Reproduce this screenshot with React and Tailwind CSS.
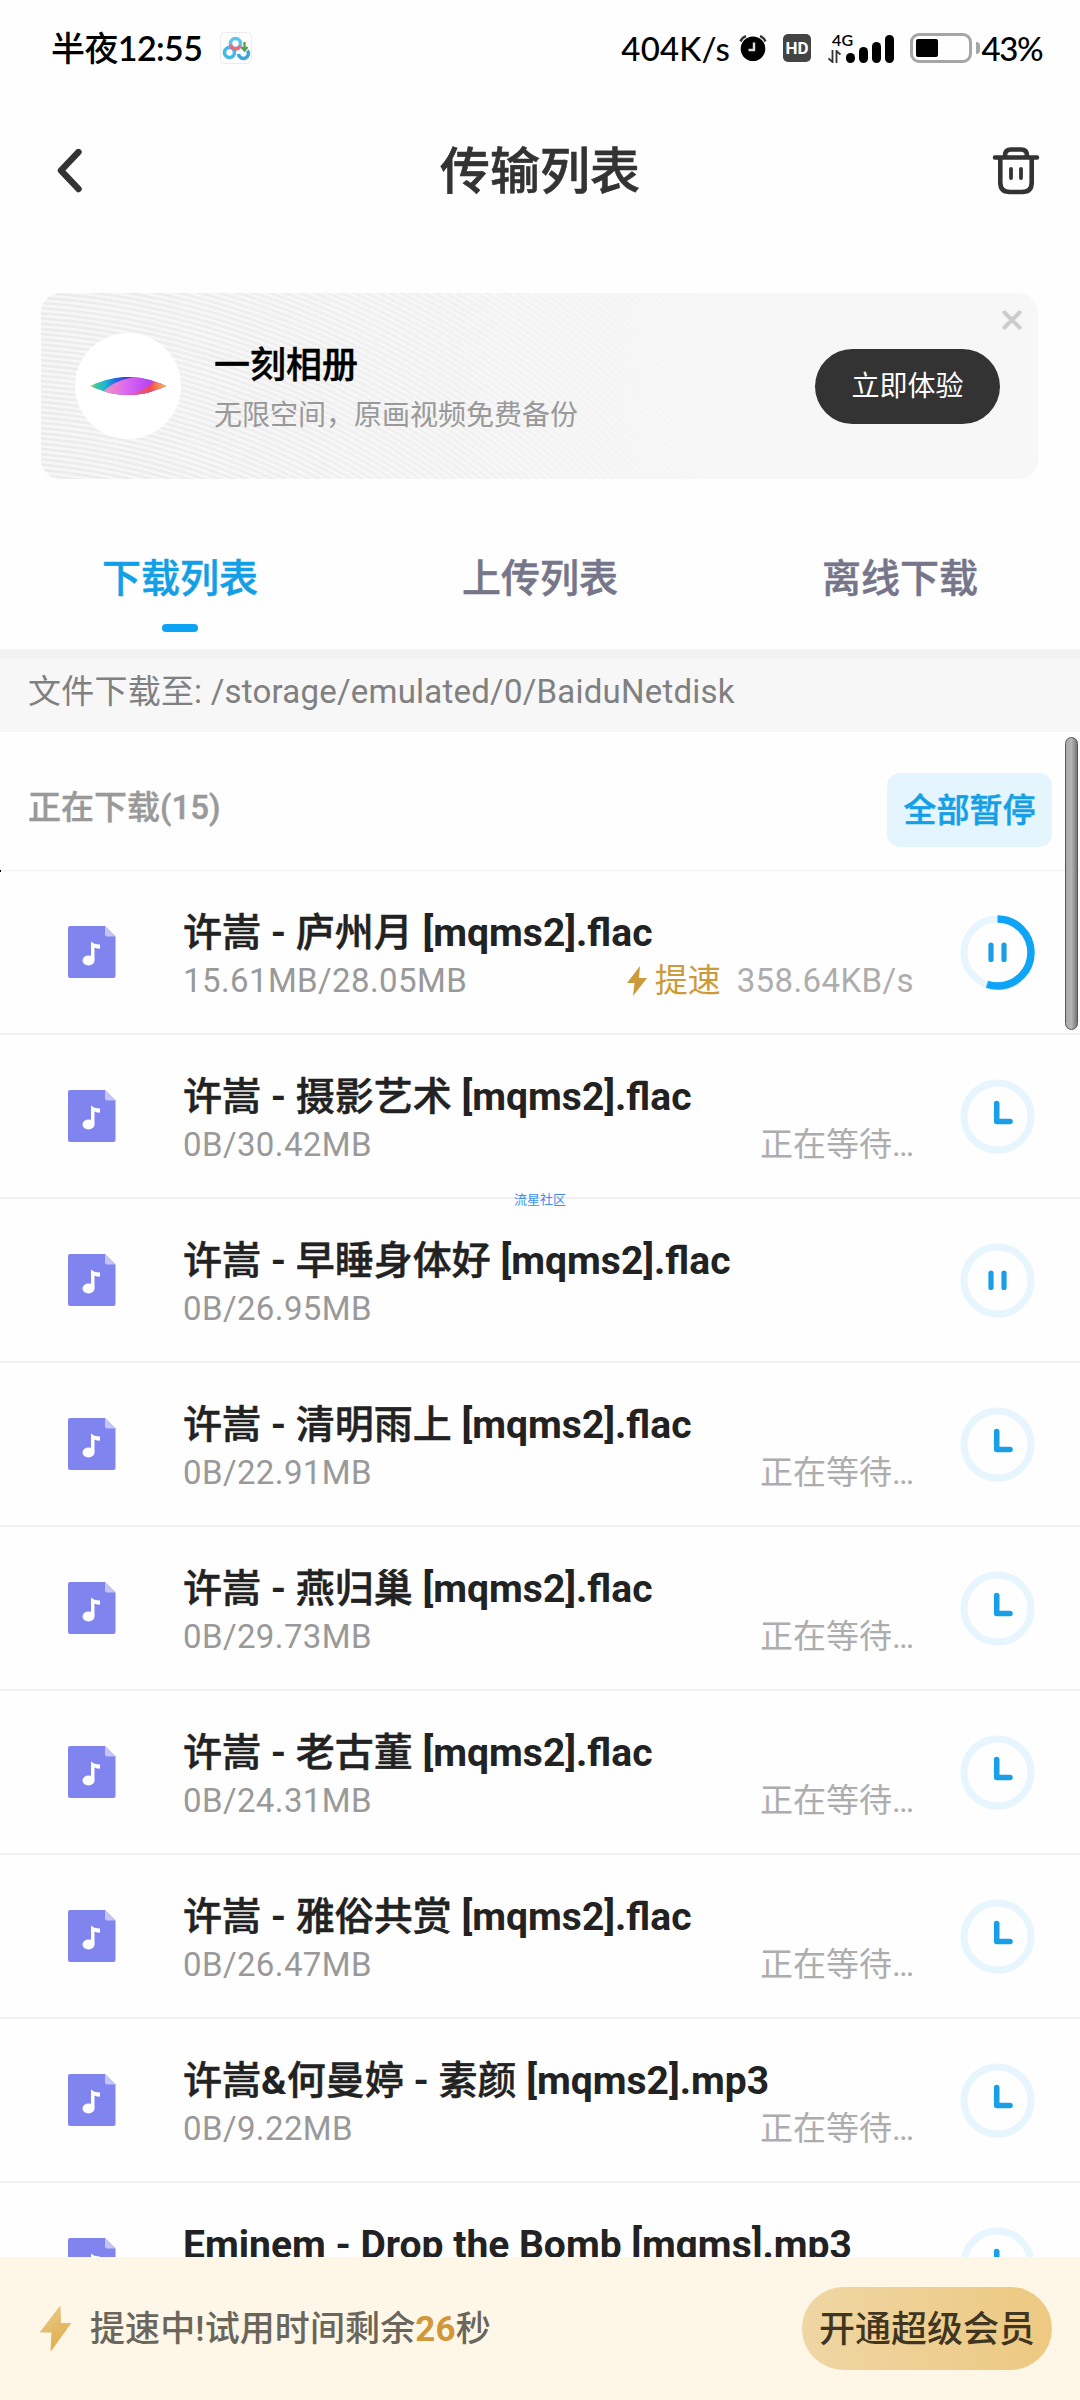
const UI = "font-['Roboto','Noto_Sans_CJK_SC',sans-serif]";

const rows = [
  { name: '许嵩 - 庐州月 [mqms2].flac', size: '15.61MB/28.05MB', speed: '358.64KB/s', icon: 'pause', progress: 0.55 },
  { name: '许嵩 - 摄影艺术 [mqms2].flac', size: '0B/30.42MB', status: '正在等待…', icon: 'clock' },
  { name: '许嵩 - 早睡身体好 [mqms2].flac', size: '0B/26.95MB', icon: 'pause' },
  { name: '许嵩 - 清明雨上 [mqms2].flac', size: '0B/22.91MB', status: '正在等待…', icon: 'clock' },
  { name: '许嵩 - 燕归巢 [mqms2].flac', size: '0B/29.73MB', status: '正在等待…', icon: 'clock' },
  { name: '许嵩 - 老古董 [mqms2].flac', size: '0B/24.31MB', status: '正在等待…', icon: 'clock' },
  { name: '许嵩 - 雅俗共赏 [mqms2].flac', size: '0B/26.47MB', status: '正在等待…', icon: 'clock' },
  { name: '许嵩&何曼婷 - 素颜 [mqms2].mp3', size: '0B/9.22MB', status: '正在等待…', icon: 'clock' },
  { name: 'Eminem - Drop the Bomb [mqms].mp3', icon: 'clock' },
];

function NetdiskIcon() {
  return (
    <svg className="ml-[18px] h-8 w-8" viewBox="0 0 32 32" fill="none">
      <rect x="0.5" y="0.5" width="31" height="31" rx="4" fill="#fdfdfd" stroke="#ececec" />
      <circle cx="9.5" cy="20.5" r="5" stroke="#45b9e6" strokeWidth="3.6" />
      <path d="M18.500 22a5 5 0 1 0 9-3.500" stroke="#3aa6dc" strokeWidth="3.6" />
      <circle cx="15.500" cy="11.500" r="5" stroke="#5cc3ea" strokeWidth="3.6" />
      <path d="M10.500 12.500a5 5 0 0 0 9.500 1.500" stroke="#ea6a82" strokeWidth="3.6" />
      <path d="M24.500 10v7M21.500 15l3 3.500 3-3.500" stroke="#4e9d4a" strokeWidth="2.200" />
    </svg>
  );
}

function AlarmIcon() {
  return (
    <svg className="ml-[9px] h-7 w-7" viewBox="0 0 28 28" fill="none">
      <circle cx="14" cy="14.700" r="12.300" fill="#000" />
      <path d="M1.500 7.500Q3 3.500 7 2.200M26.500 7.500Q25 3.500 21 2.200" stroke="#333" strokeWidth="2.400" />
      <path d="M15 8.500V16H9.500" stroke="#ddd" strokeWidth="2.400" />
    </svg>
  );
}

function Signal() {
  return (
    <div className="ml-[17px] flex h-8 items-end">
      <div className="flex w-[18px] flex-col">
        <span className="ml-1 text-[16px] leading-[15px] font-semibold font-['Lato',sans-serif]">4G</span>
        <svg className="mt-[3px] mb-px h-[13px] w-[13px]" viewBox="0 0 13 13" stroke="#333" strokeWidth="1.800" fill="none">
          <path d="M4.500 0v12L0.500 8.500M8.500 13V1l4 3.500" />
        </svg>
      </div>
      <div className="flex items-end gap-[4.5px] pb-px">
        <i className="h-[10px] w-[8.5px] rounded-full bg-black" />
        <i className="h-[16px] w-[8.5px] rounded-full bg-black" />
        <i className="h-[21px] w-[8.5px] rounded-full bg-black" />
        <i className="h-[28px] w-[8.5px] rounded-full bg-black" />
      </div>
    </div>
  );
}

function StatusBar() {
  return (
    <div className="flex h-[96px] items-center justify-between pr-[38px] pl-[51px] text-black">
      <div className="flex items-center">
        <span className="text-[34px] leading-10 font-semibold tracking-[-0.6px] font-['Lato','Noto_Sans_CJK_SC',sans-serif]"><span className="font-medium">半夜</span>12:55</span>
        <NetdiskIcon />
      </div>
      <div className="flex items-center">
        <span className="text-[33px] leading-10 font-medium tracking-[0.2px] font-['Lato',sans-serif]">404K/s</span>
        <AlarmIcon />
        <span className="ml-[16px] flex h-7 w-7 items-center justify-center rounded-[5px] bg-[#444] text-[17px] leading-none font-bold text-white font-['Roboto',sans-serif]">HD</span>
        <Signal />
        <div className="ml-[16px] flex h-[30px] w-[62px] items-center rounded-[9px] border-[3px] border-[#a6a6a6] pl-[3px]">
          <div className="h-[18px] w-[22px] rounded-[2px] bg-black" />
        </div>
        <div className="ml-1 h-3 w-1 rounded-r-full bg-[#a6a6a6]" />
        <span className="ml-0.5 text-[33px] leading-10 font-medium tracking-[-1.5px] font-['Lato',sans-serif]">43%</span>
      </div>
    </div>
  );
}

function Header() {
  return (
    <div className="grid h-[150px] grid-cols-[1fr_auto_1fr] items-center pr-[40px] pl-[40px]">
      <svg className="ml-4 h-[44px] w-[48px]" viewBox="0 0 48 44" fill="none">
        <path d="M22.500 3L5 21.500l17.500 18.500" stroke="#333" strokeWidth="6.400" strokeLinecap="round" strokeLinejoin="round" />
      </svg>
      <h1 className="pt-0.5 text-[50px] leading-[60px] font-medium text-[#333] [-webkit-text-stroke:0.6px_#333]">传输列表</h1>
      <svg className="h-[48px] w-[48px] justify-self-end" viewBox="0 0 48 48" fill="none" stroke="#333" strokeWidth="4.600" strokeLinecap="round">
        <path d="M3 10.500h42M13 10V8.500q0-6 6-6h10q6 0 6 6V10M8.300 11v24.500q0 9.500 9.500 9.500h12.400q9.500 0 9.500-9.500V11" />
        <path d="M19 22v9M29 22v9" strokeWidth="3.800" />
      </svg>
    </div>
  );
}

function Stripes() {
  return (
    <svg className="absolute inset-0 h-full w-full" viewBox="0 0 997 186" fill="none">
      <defs>
        <linearGradient id="fade" x1="0" x2="1" y1="0" y2="0">
          <stop offset="0" stopColor="#fff" />
          <stop offset="0.350" stopColor="#fff" stopOpacity="0.550" />
          <stop offset="0.680" stopColor="#fff" stopOpacity="0" />
        </linearGradient>
        <mask id="fadeMask"><rect width="997" height="186" fill="url(#fade)" /></mask>
      </defs>
      <g mask="url(#fadeMask)" stroke="#ebebeb" strokeWidth="2.600">
        {Array.from({ length: 130 }, (_, i) => (
          <circle key={i} cx="-60" cy="820" r={620 + i * 5.2} />
        ))}
      </g>
    </svg>
  );
}

function PromoCard() {
  return (
    <div className="relative ml-[41px] mt-[47px] flex h-[186px] w-[997px] items-center overflow-hidden rounded-[20px] bg-[#f7f7f7] pr-[38px] pl-[34px]">
      <Stripes />
      <div className="relative flex h-[106px] w-[106px] items-center justify-center rounded-full bg-white">
        <svg className="h-[18px] w-[76px]" viewBox="0 0 76 18">
          <defs>
            <clipPath id="lens"><path d="M0 9C16 2 26 0 38 0S60 2 76 9C60 16 50 18 38 18S16 16 0 9Z" /></clipPath>
            <linearGradient id="lensBack" x1="0" x2="1">
              <stop offset="0" stopColor="#c9c86a" />
              <stop offset="0.080" stopColor="#3ec79b" />
              <stop offset="0.200" stopColor="#1fb4d4" />
              <stop offset="0.350" stopColor="#2268e0" />
              <stop offset="0.500" stopColor="#3a35b8" />
              <stop offset="0.650" stopColor="#a04cf0" />
            </linearGradient>
            <linearGradient id="lensFront" x1="0" x2="1">
              <stop offset="0" stopColor="#f79ab0" />
              <stop offset="0.400" stopColor="#dc68f2" />
              <stop offset="0.700" stopColor="#b949f5" />
              <stop offset="1" stopColor="#c03cd0" />
            </linearGradient>
            <linearGradient id="lensTip" x1="0" x2="1">
              <stop offset="0" stopColor="#e060c0" />
              <stop offset="0.600" stopColor="#ef4a58" />
              <stop offset="1" stopColor="#f8c04a" />
            </linearGradient>
          </defs>
          <g clipPath="url(#lens)">
            <rect width="76" height="18" fill="url(#lensBack)" />
            <path d="M10 18Q24 2 46 0H76V18Z" fill="url(#lensFront)" />
            <path d="M36 18Q54 15 66 3H76V18Z" fill="url(#lensTip)" />
          </g>
        </svg>
      </div>
      <div className="relative ml-[33px] flex-1 pt-[9px]">
        <div className="text-[36px] leading-[50px] font-medium text-black [-webkit-text-stroke:0.4px_#000]">一刻相册</div>
        <div className="text-[28px] leading-[50px] text-[#999]">无限空间，原画视频免费备份</div>
      </div>
      <button className="relative h-[75px] w-[185px] rounded-full bg-[#333] pt-0.5 text-[28px] text-white">立即体验</button>
      <svg className="absolute top-[17px] right-4 h-5 w-5" viewBox="0 0 20 20">
        <path d="M2.500 2.500l15 15M17.500 2.500l-15 15" stroke="#ccc" strokeWidth="4" strokeLinecap="round" />
      </svg>
    </div>
  );
}

function Tabs() {
  return (
    <div className="mt-[40px] grid h-[130px] grid-cols-3 text-center text-[39px] leading-[60px] font-medium text-[#75768a] [-webkit-text-stroke:0.5px]">
      <div className="flex flex-col items-center pt-[30px] text-[#129fe6]">
        下载列表
        <div className="mt-[15px] h-2 w-9 rounded-full bg-[#0ca3f5]" />
      </div>
      <div className="pt-[30px]">上传列表</div>
      <div className="pt-[30px]">离线下载</div>
    </div>
  );
}

function FileIcon() {
  return (
    <svg className="h-[52px] w-[48px]" viewBox="0 0 48 52">
      <path d="M2 0H37L47.500 10.500V50a2 2 0 0 1-2 2H2a2 2 0 0 1-2-2V2A2 2 0 0 1 2 0Z" fill="#8084ee" />
      <path d="M37 0L47.500 10.500H39a2 2 0 0 1-2-2Z" fill="#c3c4f8" />
      <ellipse cx="20.500" cy="34.500" rx="6" ry="5" fill="#fff" />
      <path d="M23 34V15.500q3 3 9 3v4q-3 .500-5.500-1V34Z" fill="#fff" />
    </svg>
  );
}

function StateRing({ icon, progress }) {
  const len = 2 * Math.PI * 33.5;
  return (
    <svg className="h-[75px] w-[75px]" viewBox="0 0 75 75" fill="none">
      <circle cx="37.500" cy="37.500" r="33.500" stroke="#e6f5fe" strokeWidth="7" />
      {progress && (
        <circle cx="37.500" cy="37.500" r="33.500" stroke="#0ea5f8" strokeWidth="7.500"
          strokeDasharray={`${len * progress} ${len}`} transform="rotate(-90 37.5 37.5)" />
      )}
      {icon === 'pause' ? (
        <path d="M31 30v14.500M44 30v14.500" stroke="#1a9fe6" strokeWidth="5.200" strokeLinecap="round" />
      ) : (
        <path d="M36.700 24.500v18H50" stroke="#1a9fe6" strokeWidth="5.600" strokeLinecap="round" strokeLinejoin="round" />
      )}
    </svg>
  );
}

// Latin runs are set in bold, Chinese runs in an emboldened medium weight.
function FileName({ children }) {
  return children.split(/([\u4e00-\u9fff]+)/).map((part, i) =>
    i % 2 ? (
      <span key={i} className="font-medium [-webkit-text-stroke:0.5px_#222]">{part}</span>
    ) : (
      <span key={i} className="font-bold">{part}</span>
    ),
  );
}

function Row({ row }) {
  return (
    <div className="flex h-[164px] shrink-0 items-center border-b-2 border-[#efefef] pr-[45px] pl-[68px]">
      <FileIcon />
      <div className="ml-[67px] w-[731px] pt-[9px]">
        <div className="text-[39px] leading-[48px] whitespace-nowrap text-[#222]"><FileName>{row.name}</FileName></div>
        <div className="flex h-[48px] items-center justify-between text-[33px] leading-[48px] text-[#999]">
          {row.size && <span className="tracking-[0.4px]">{row.size}</span>}
          {row.speed && (
            <span className="flex items-center text-[#adadad]">
              <svg className="mr-2 h-[30px] w-[20px]" viewBox="0 0 20 30"><path d="M13 0L0 17h7.500L6 30 20 12h-8Z" fill="#cc9a3a" /></svg>
              <span className="mr-[16px] text-[#cc9a3a]">提速</span>
              <span className="tracking-[0.4px]">{row.speed}</span>
            </span>
          )}
          {row.status && <span className="text-[#adadad]">{row.status}</span>}
        </div>
      </div>
      <div className="ml-auto"><StateRing icon={row.icon} progress={row.progress} /></div>
    </div>
  );
}

function BottomBar() {
  return (
    <div className="flex h-[143px] shrink-0 items-center bg-[#fef7e7] pr-7 pl-[40px]">
      <svg className="h-[45px] w-[31px]" viewBox="0 0 31 45">
        <defs><linearGradient id="bolt" x1="0" x2="0.400" y1="0" y2="1"><stop stopColor="#ecc98c" /><stop offset="1" stopColor="#dfb052" /></linearGradient></defs>
        <path d="M20 0.500L0.500 26H12L11 44.500 30.500 17.500H20.500Z" fill="url(#bolt)" stroke="url(#bolt)" strokeLinejoin="round" />
      </svg>
      <div className="ml-[19px] pt-[3px] text-[35px] leading-[50px] font-medium tracking-[0.1px] text-[#6a665c]">
        提速中!试用时间剩余<span className="font-bold text-[#d0983a]">26</span>秒
      </div>
      <button className="ml-auto h-[83px] w-[250px] rounded-full bg-linear-to-r from-[#efd6a3] to-[#edc981] pt-0.5 text-[36px] font-medium text-[#3f3521]">
        开通超级会员
      </button>
    </div>
  );
}

export default function App() {
  return (
    <div className={`relative flex h-[2400px] w-[1080px] flex-col overflow-hidden bg-[#fefefe] ${UI}`}>
      <StatusBar />
      <Header />
      <PromoCard />
      <Tabs />
      <div className="flex h-[83px] shrink-0 items-center border-t-[10px] border-[#f3f3f3] bg-[#f7f7f7] pb-[7px] pl-[28px] text-[33px] tracking-[0.22px] text-[#808080]">
        文件下载至: /storage/emulated/0/BaiduNetdisk
      </div>
      <div className="flex h-[139px] shrink-0 items-center justify-between border-b border-[#f0f0f0] pt-[18px] pr-7 pl-[28px]">
        <div className="pb-[4px] text-[33px] font-medium text-[#999] [-webkit-text-stroke:0.4px_#999]">正在下载(15)</div>
        <button className="h-[74px] w-[165px] rounded-[13px] bg-[#e4f5fd] pt-0.5 text-[33px] font-medium text-[#159fe6] [-webkit-text-stroke:0.5px_#159fe6]">全部暂停</button>
      </div>
      <div className="flex min-h-0 flex-1 flex-col overflow-hidden">
        {rows.map((row) => <Row key={row.name} row={row} />)}
      </div>
      <BottomBar />
      <div className="absolute top-[870px] left-0 h-0.5 w-px bg-black" />
      <div className="absolute top-[737px] left-[1065px] h-[293px] w-[13px] rounded-full border border-[#555] bg-linear-to-r from-[#aaa] via-[#b4b4b4] to-[#777]" />
      <div className="absolute top-[1193px] left-[514px] text-[13px] leading-[14px] text-[#3b8ff0]">流星社区</div>
    </div>
  );
}
